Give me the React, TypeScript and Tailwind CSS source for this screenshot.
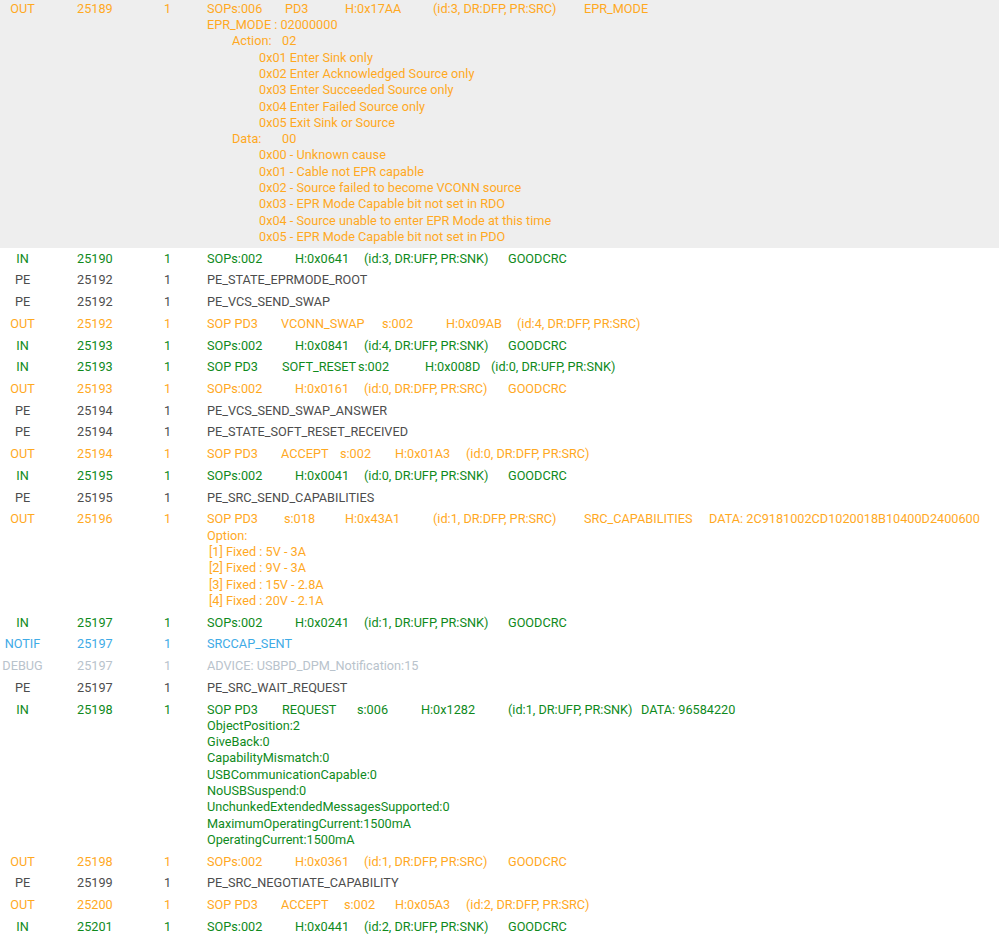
type Kind = "out" | "in" | "pe" | "notif" | "debug";

const colors: Record<Kind, string> = {
  out: "text-[#ffa91f]",
  in: "text-[#0f8a1c]",
  pe: "text-[#4d4d4d]",
  notif: "text-[#3fabe6]",
  debug: "text-[#b9c3cc]",
};
const labels: Record<Kind, string> = { out: "OUT", in: "IN", pe: "PE", notif: "NOTIF", debug: "DEBUG" };

function S({ w, children }: { w: string; children: string }) {
  return <span className={`${w} shrink-0 whitespace-pre`}>{children}</span>;
}

function Row({
  kind,
  time,
  gray,
  children,
  extra,
}: {
  kind: Kind;
  time: number;
  gray?: boolean;
  children: React.ReactNode;
  extra?: React.ReactNode;
}) {
  return (
    <div className={`flex py-[2.73px] ${colors[kind]} ${gray ? "bg-[#eeeeee]" : ""}`}>
      <div className="w-[45px] shrink-0 text-center">{labels[kind]}</div>
      <div className="w-[105px] shrink-0 pl-[32px]">{time}</div>
      <div className="w-[35px] shrink-0 text-center">1</div>
      <div className="pl-[22px] min-w-0 flex-1">
        <div className="flex">{children}</div>
        {extra}
      </div>
    </div>
  );
}

function Good({ sop, h, id }: { sop: string; h: string; id: string }) {
  return (
    <>
      <S w="w-[88px]">{sop}</S>
      <S w="w-[69px]">{h}</S>
      <S w="w-[144px]">{id}</S>
      <S w="w-auto">GOODCRC</S>
    </>
  );
}

function L({ pl, children }: { pl: string; children: React.ReactNode }) {
  return <div className={`${pl} whitespace-pre`}>{children}</div>;
}

export default function App() {
  return (
    <div className="w-[999px] h-[940px] overflow-hidden bg-white font-['Roboto',sans-serif] text-[12.7px] leading-[16.3px]">
      <div className="-mt-[2px]">
        <Row
          kind="out"
          time={25189}
          gray
          extra={
            <>
              <L pl="pl-0">EPR_MODE : 02000000</L>
              <L pl="pl-[25px]">
                <span className="inline-block w-[50px]">Action:</span>02
              </L>
              <L pl="pl-[52px]">0x01 Enter Sink only</L>
              <L pl="pl-[52px]">0x02 Enter Acknowledged Source only</L>
              <L pl="pl-[52px]">0x03 Enter Succeeded Source only</L>
              <L pl="pl-[52px]">0x04 Enter Failed Source only</L>
              <L pl="pl-[52px]">0x05 Exit Sink or Source</L>
              <L pl="pl-[25px]">
                <span className="inline-block w-[50px]">Data:</span>00
              </L>
              <L pl="pl-[52px]">0x00 - Unknown cause</L>
              <L pl="pl-[52px]">0x01 - Cable not EPR capable</L>
              <L pl="pl-[52px]">0x02 - Source failed to become VCONN source</L>
              <L pl="pl-[52px]">0x03 - EPR Mode Capable bit not set in RDO</L>
              <L pl="pl-[52px]">0x04 - Source unable to enter EPR Mode at this time</L>
              <L pl="pl-[52px]">0x05 - EPR Mode Capable bit not set in PDO</L>
            </>
          }
        >
          <S w="w-[78px]">SOPs:006</S>
          <S w="w-[60px]">PD3</S>
          <S w="w-[88px]">H:0x17AA</S>
          <S w="w-[151px]">(id:3, DR:DFP, PR:SRC)</S>
          <S w="w-auto">EPR_MODE</S>
        </Row>
        <Row kind="in" time={25190}>
          <Good sop="SOPs:002" h="H:0x0641" id="(id:3, DR:UFP, PR:SNK)" />
        </Row>
        <Row kind="pe" time={25192}>PE_STATE_EPRMODE_ROOT</Row>
        <Row kind="pe" time={25192}>PE_VCS_SEND_SWAP</Row>
        <Row kind="out" time={25192}>
          <S w="w-[74px]">SOP PD3</S>
          <S w="w-[101px]">VCONN_SWAP</S>
          <S w="w-[64px]">s:002</S>
          <S w="w-[71px]">H:0x09AB</S>
          <S w="w-auto">(id:4, DR:DFP, PR:SRC)</S>
        </Row>
        <Row kind="in" time={25193}>
          <Good sop="SOPs:002" h="H:0x0841" id="(id:4, DR:UFP, PR:SNK)" />
        </Row>
        <Row kind="in" time={25193}>
          <S w="w-[75px]">SOP PD3</S>
          <S w="w-[76px]">SOFT_RESET</S>
          <S w="w-[67px]">s:002</S>
          <S w="w-[66px]">H:0x008D</S>
          <S w="w-auto">(id:0, DR:UFP, PR:SNK)</S>
        </Row>
        <Row kind="out" time={25193}>
          <Good sop="SOPs:002" h="H:0x0161" id="(id:0, DR:DFP, PR:SRC)" />
        </Row>
        <Row kind="pe" time={25194}>PE_VCS_SEND_SWAP_ANSWER</Row>
        <Row kind="pe" time={25194}>PE_STATE_SOFT_RESET_RECEIVED</Row>
        <Row kind="out" time={25194}>
          <S w="w-[74px]">SOP PD3</S>
          <S w="w-[59px]">ACCEPT</S>
          <S w="w-[55px]">s:002</S>
          <S w="w-[71px]">H:0x01A3</S>
          <S w="w-auto">(id:0, DR:DFP, PR:SRC)</S>
        </Row>
        <Row kind="in" time={25195}>
          <Good sop="SOPs:002" h="H:0x0041" id="(id:0, DR:UFP, PR:SNK)" />
        </Row>
        <Row kind="pe" time={25195}>PE_SRC_SEND_CAPABILITIES</Row>
        <Row
          kind="out"
          time={25196}
          extra={
            <>
              <L pl="pl-0">Option:</L>
              <L pl="pl-[2px]">[1] Fixed : 5V - 3A</L>
              <L pl="pl-[2px]">[2] Fixed : 9V - 3A</L>
              <L pl="pl-[2px]">[3] Fixed : 15V - 2.8A</L>
              <L pl="pl-[2px]">[4] Fixed : 20V - 2.1A</L>
            </>
          }
        >
          <S w="w-[77px]">SOP PD3</S>
          <S w="w-[61px]">s:018</S>
          <S w="w-[88px]">H:0x43A1</S>
          <S w="w-[151px]">(id:1, DR:DFP, PR:SRC)</S>
          <S w="w-[125px]">SRC_CAPABILITIES</S>
          <S w="w-auto">DATA: 2C9181002CD1020018B10400D2400600</S>
        </Row>
        <Row kind="in" time={25197}>
          <Good sop="SOPs:002" h="H:0x0241" id="(id:1, DR:UFP, PR:SNK)" />
        </Row>
        <Row kind="notif" time={25197}>SRCCAP_SENT</Row>
        <Row kind="debug" time={25197}>ADVICE: USBPD_DPM_Notification:15</Row>
        <Row kind="pe" time={25197}>PE_SRC_WAIT_REQUEST</Row>
        <Row
          kind="in"
          time={25198}
          extra={
            <>
              <L pl="pl-0">ObjectPosition:2</L>
              <L pl="pl-0">GiveBack:0</L>
              <L pl="pl-0">CapabilityMismatch:0</L>
              <L pl="pl-0">USBCommunicationCapable:0</L>
              <L pl="pl-0">NoUSBSuspend:0</L>
              <L pl="pl-0">UnchunkedExtendedMessagesSupported:0</L>
              <L pl="pl-0">MaximumOperatingCurrent:1500mA</L>
              <L pl="pl-0">OperatingCurrent:1500mA</L>
            </>
          }
        >
          <S w="w-[75px]">SOP PD3</S>
          <S w="w-[75px]">REQUEST</S>
          <S w="w-[64px]">s:006</S>
          <S w="w-[87px]">H:0x1282</S>
          <S w="w-[133px]">(id:1, DR:UFP, PR:SNK)</S>
          <S w="w-auto">DATA: 96584220</S>
        </Row>
        <Row kind="out" time={25198}>
          <Good sop="SOPs:002" h="H:0x0361" id="(id:1, DR:DFP, PR:SRC)" />
        </Row>
        <Row kind="pe" time={25199}>PE_SRC_NEGOTIATE_CAPABILITY</Row>
        <Row kind="out" time={25200}>
          <S w="w-[74px]">SOP PD3</S>
          <S w="w-[63px]">ACCEPT</S>
          <S w="w-[51px]">s:002</S>
          <S w="w-[71px]">H:0x05A3</S>
          <S w="w-auto">(id:2, DR:DFP, PR:SRC)</S>
        </Row>
        <Row kind="in" time={25201}>
          <Good sop="SOPs:002" h="H:0x0441" id="(id:2, DR:UFP, PR:SNK)" />
        </Row>
      </div>
    </div>
  );
}
